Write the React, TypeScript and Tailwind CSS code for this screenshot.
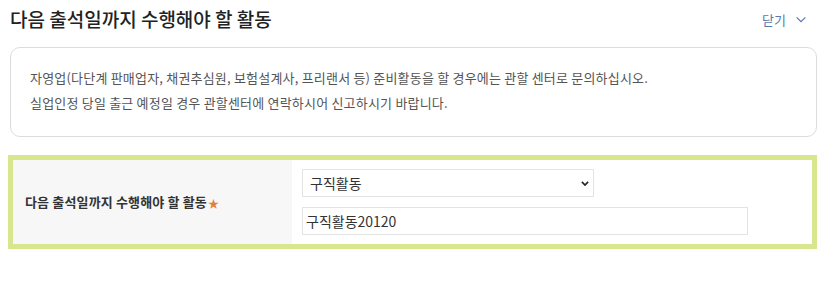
import { useState } from "react";

const font = "font-['Noto_Sans_CJK_KR','Noto_Sans',sans-serif]";

function ChevronDown({ className, width = 1.4 }: { className?: string; width?: number }) {
  return (
    <svg className={className} viewBox="0 0 12 8" fill="none">
      <path d="M1 1.5l5 5 5-5" stroke="currentColor" strokeWidth={width} />
    </svg>
  );
}

export default function App() {
  const [activity, setActivity] = useState("구직활동");
  const [detail, setDetail] = useState("구직활동20120");

  return (
    <div className={`${font} h-[285px] w-[834px] bg-white text-[#333]`}>
      <div className="ml-[8px] w-[809px]">
        {/* header */}
        <div className="flex h-[38px] items-center justify-between pl-[2px] pr-[10px] pt-[1px]">
          <h2 className="text-[19px] font-medium tracking-[0px] text-[#222]">
            다음 출석일까지 수행해야 할 활동
          </h2>
          <button type="button" className="flex items-center gap-[9px] text-[13px] text-[#5a78ad]">
            닫기
            <ChevronDown className="h-[7px] w-[12px]" />
          </button>
        </div>

        {/* notice */}
        <div className="ml-[2px] mt-[9px] h-[90px] w-[807px] rounded-[10px] border border-[#dcdcdc] pl-[19px] pt-[17px] text-[13px] leading-[25px] tracking-[0.2px] text-[#555]">
          <p>자영업(다단계 판매업자, 채권추심원, 보험설계사, 프리랜서 등) 준비활동을 할 경우에는 관할 센터로 문의하십시오.</p>
          <p>실업인정 당일 출근 예정일 경우 관할센터에 연락하시어 신고하시기 바랍니다.</p>
        </div>

        {/* form */}
        <div className="mt-[18px] flex h-[94px] border-[5px] border-[#d8e68e]">
          <div className="flex w-[279px] items-center bg-[#f7f7f7] pl-[12px] text-[13px] font-bold tracking-[0.15px] text-[#333]">
            다음 출석일까지 수행해야 할 활동
            <span className="ml-[1px] mt-[2px] text-[11px] text-[#e0823c]">★</span>
          </div>
          <div className="flex flex-col gap-[10px] pl-[10px] pt-[9px]">
            <div className="relative w-[292px]">
              <select
                value={activity}
                onChange={(e) => setActivity(e.target.value)}
                className="h-[28px] w-full appearance-none border border-[#e3e3e3] bg-white pl-[7px] text-[14px] text-[#333] outline-none"
              >
                <option>구직활동</option>
                <option>자영업 준비활동</option>
              </select>
              <ChevronDown width={2.6} className="pointer-events-none absolute right-[5px] top-[12px] h-[5px] w-[8px] text-[#222]" />
            </div>
            <input
              value={detail}
              onChange={(e) => setDetail(e.target.value)}
              className="h-[28px] w-[446px] border border-[#e3e3e3] bg-white pl-[3px] text-[14px] text-[#333] outline-none"
            />
          </div>
        </div>
      </div>
    </div>
  );
}
